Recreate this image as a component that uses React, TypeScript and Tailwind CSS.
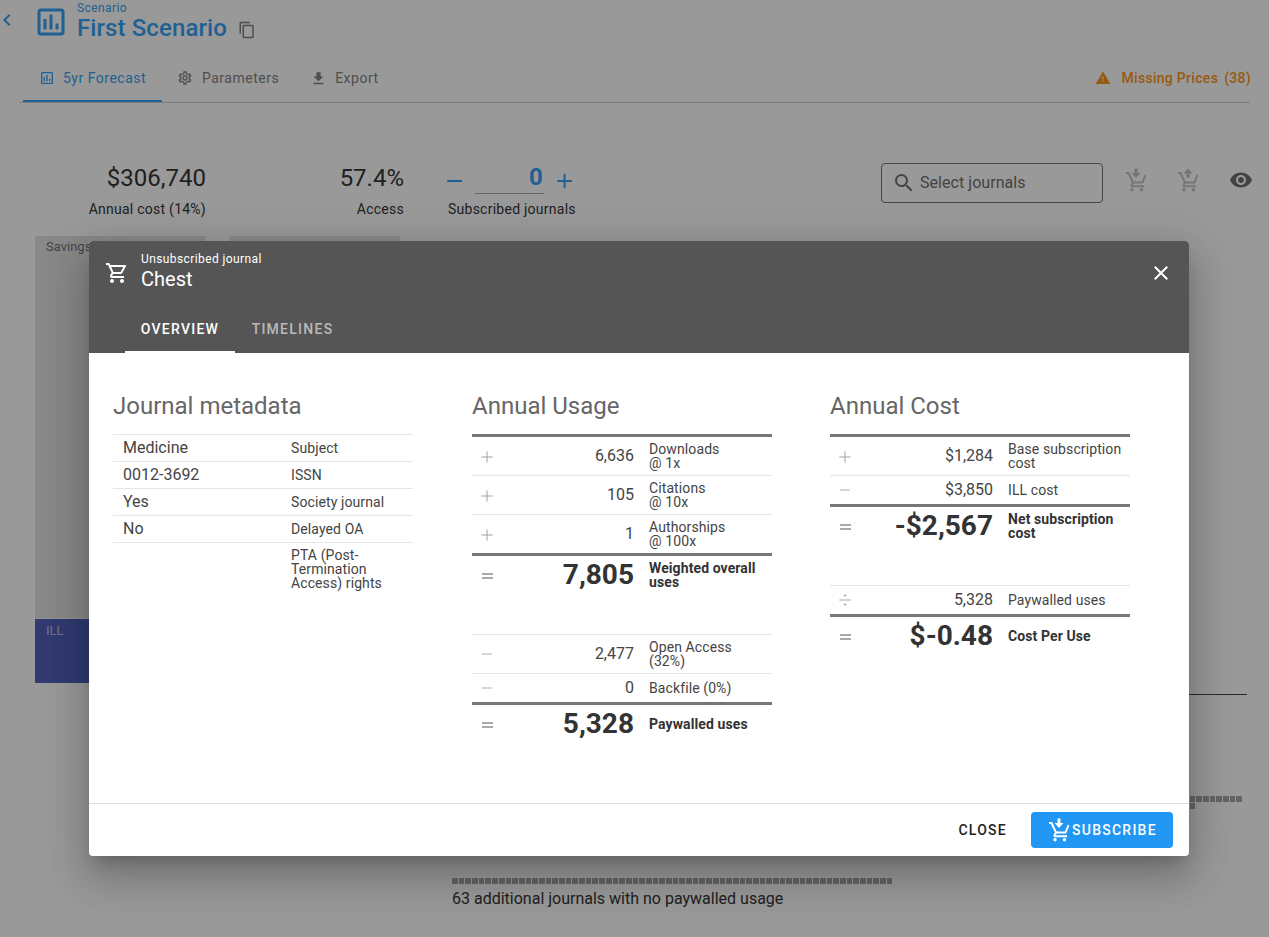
import React from 'react';
import { Divide, Minus, Plus } from 'lucide-react';
import { MdAdd, MdChevronLeft, MdClose, MdContentCopy, MdFileDownload, MdOutlineAssessment, MdOutlineSettings, MdOutlineShoppingCart, MdRemove, MdRemoveRedEye, MdSearch, MdWarning } from 'react-icons/md';

const CartArrow = ({ up = false, className = '' }: { up?: boolean; className?: string }) => (
  <svg viewBox="0 0 24 24" className={className} fill="none" stroke="currentColor">
    <circle cx="8" cy="21.8" r="1.7" fill="currentColor" stroke="none" />
    <circle cx="17.5" cy="21.8" r="1.7" fill="currentColor" stroke="none" />
    <path strokeWidth="2" d="M2 5h2.5L9 14.5l-1.5 2.6c-.3.6 0 1.2.7 1.2H20" />
    <path strokeWidth="2" d="M8.5 14.5h10L21.5 7" />
    {up ? (
      <path fill="currentColor" stroke="none" d="M12 .5l4.5 5h-3V10h-3V5.5h-3z" />
    ) : (
      <path fill="currentColor" stroke="none" d="M10.5 .5h3V5h3L12 10 7.5 5h3z" />
    )}
  </svg>
);

const metadata = [
  ['Medicine', 'Subject'],
  ['0012-3692', 'ISSN'],
  ['Yes', 'Society journal'],
  ['No', 'Delayed OA'],
  ['', 'PTA (Post-Termination Access) rights'],
];

const signs: Record<string, React.ReactNode> = {
  '+': <Plus size={18} strokeWidth={1.2} className="mt-[1px]" />,
  '-': <Minus size={16} strokeWidth={1.2} />,
  '/': <Divide size={18} strokeWidth={1.2} />,
};

type RowProps = { sign: string; value: string; label: string; cost?: boolean };

const Row = ({ sign, value, label, cost = false }: RowProps) => (
  <div className="flex items-center border-b border-[#e6e6e6] py-[5px] last:border-b-0">
    <div className="flex w-[30px] justify-center text-[#999]">{signs[sign]}</div>
    <div className={`${cost ? 'w-[133px]' : 'w-[132px]'} text-right text-[16px] leading-[18px] text-[#444]`}>{value}</div>
    <div className="ml-[15px] w-[122px] whitespace-pre-line text-[14px] leading-[14px] tracking-[0.1px] text-[#444]">{label}</div>
  </div>
);

const Total = ({ value, label, spaced = false, cost = false }: { value: string; label: string; spaced?: boolean; cost?: boolean }) => (
  <div className={`box-content flex h-[38px] items-center border-t-[3px] border-[#777] ${spaced ? 'mb-[40px]' : ''}`}>
    <div className="flex w-[30px] justify-center text-[#aaa]">
      <svg width="11" height="6" viewBox="0 0 11 6" fill="currentColor" className="mt-[1px]">
        <rect width="11" height="2" />
        <rect y="4" width="11" height="2" />
      </svg>
    </div>
    <div className={`${cost ? 'w-[133px]' : 'w-[132px]'} whitespace-nowrap text-right text-[28px] leading-none font-bold text-[#333]`}>{value}</div>
    <div className="ml-[15px] w-[122px] text-[14px] leading-[14px] font-bold tracking-[0.1px] text-[#333]">{label}</div>
  </div>
);

const Group = ({ children, plain = false }: { children: React.ReactNode; plain?: boolean }) => (
  <div className={plain ? 'border-t border-[#e6e6e6]' : 'border-t-[3px] border-[#777]'}>{children}</div>
);

const Heading = ({ children }: { children: React.ReactNode }) => (
  <h3 className="mb-[12px] text-[24px] leading-[32px] text-[#666]">{children}</h3>
);

const Modal = () => (
  <div className="absolute top-[241px] left-[89px] flex h-[615px] w-[1100px] flex-col overflow-hidden rounded bg-white shadow-[0_11px_15px_-7px_rgba(0,0,0,0.2),0_24px_38px_3px_rgba(0,0,0,0.14),0_9px_46px_8px_rgba(0,0,0,0.12)]">
    <div className="h-[112px] bg-[#555] text-white">
      <div className="flex h-[64px] items-center pr-4 pl-4">
        <MdOutlineShoppingCart className="mr-3 h-6 w-6" />
        <div className="flex-1 pb-[1px]">
          <div className="text-[12px] leading-[14px] tracking-[0.4px]">Unsubscribed journal</div>
          <div className="-mt-[1px] text-[20px] leading-[28px]">Chest</div>
        </div>
        <MdClose className="h-6 w-6" />
      </div>
      <div className="ml-9 flex h-[48px]">
        <div className="flex w-[110px] items-center justify-center border-b-2 border-white pt-[2px] text-[14px] font-medium tracking-[1.25px]">OVERVIEW</div>
        <div className="flex w-[115px] items-center justify-center text-[14px] font-medium tracking-[1.25px] text-white/60">TIMELINES</div>
      </div>
    </div>
    <div className="flex flex-1 px-6 pt-[37px]">
      <div className="w-[300px]">
        <Heading>Journal metadata</Heading>
        {metadata.map(([value, label]) => (
          <div key={label} className="flex items-center border-t border-[#e6e6e6] py-[5px]">
            <div className="w-[178px] pl-[10px] text-[16px] leading-[16px] text-[#444]">{value}</div>
            <div className="w-[100px] text-[14px] leading-[14px] tracking-[0.1px] text-[#444]">{label}</div>
          </div>
        ))}
      </div>
      <div className="ml-[59px] w-[300px]">
        <Heading>Annual Usage</Heading>
        <Group>
          <Row sign="+" value="6,636" label={'Downloads\n@ 1x'} />
          <Row sign="+" value="105" label={'Citations\n@ 10x'} />
          <Row sign="+" value="1" label={'Authorships\n@ 100x'} />
        </Group>
        <Total value="7,805" label="Weighted overall uses" spaced />
        <Group plain>
          <Row sign="-" value="2,477" label={'Open Access\n(32%)'} />
          <Row sign="-" value="0" label="Backfile (0%)" />
        </Group>
        <Total value="5,328" label="Paywalled uses" />
      </div>
      <div className="ml-[58px] w-[300px]">
        <Heading>Annual Cost</Heading>
        <Group>
          <Row cost sign="+" value="$1,284" label="Base subscription cost" />
          <Row cost sign="-" value="$3,850" label="ILL cost" />
        </Group>
        <Total cost value="-$2,567" label="Net subscription cost" spaced />
        <Group plain>
          <Row cost sign="/" value="5,328" label="Paywalled uses" />
        </Group>
        <Total cost value="$-0.48" label="Cost Per Use" />
      </div>
    </div>
    <div className="flex h-[53px] items-center justify-end gap-[8px] border-t border-[#e0e0e0] pr-4">
      <button className="flex h-9 items-center px-4 text-[14px] font-medium tracking-[1.25px] text-[#212121]">CLOSE</button>
      <button className="flex h-9 w-[142px] items-center rounded bg-[#2196f3] pl-4 text-[14px] font-medium tracking-[1.25px] text-white">
        <CartArrow className="mr-[1px] -mt-[1px] h-6 w-6" />
        SUBSCRIBE
      </button>
    </div>
  </div>
);

const App = () => (
  <div className="relative h-[937px] overflow-hidden bg-white font-['Roboto',sans-serif] text-[#212121]">
    <div className="flex h-[58px] items-start">
      <MdChevronLeft className="mt-[8px] -ml-[5px] h-6 w-6 text-[#2196f3]" />
      <MdOutlineAssessment className="mt-[4px] ml-[14px] h-[36px] w-[36px] text-[#2196f3]" />
      <div className="mt-[1px] ml-[8px]">
        <div className="text-[12px] leading-[14px] tracking-[0.4px] text-[#2196f3]">Scenario</div>
        <div className="text-[24px] leading-[26px] font-medium tracking-[0.1px] text-[#2196f3]">First Scenario</div>
      </div>
      <MdContentCopy className="mt-[21px] ml-[11px] h-[18px] w-[18px] text-[#757575]" />
    </div>
    <div className="mx-[19px] flex h-[45px] items-start border-b border-[#ccc] text-[14px] tracking-[0.5px]">
      <div className="ml-[4px] flex h-[44px] w-[139px] items-center gap-[8px] border-b-2 border-[#2196f3] pb-[2px] pl-[16px] text-[#2196f3]">
        <MdOutlineAssessment className="h-4 w-4" />5yr Forecast
      </div>
      <div className="ml-[15px] flex h-[40px] items-center gap-[9px] text-[#757575]">
        <MdOutlineSettings className="h-4 w-4" />Parameters
      </div>
      <div className="ml-[31px] flex h-[40px] items-center gap-[8px] text-[#757575]">
        <MdFileDownload className="h-[17px] w-[17px]" />Export
      </div>
      <div className="ml-auto -mr-[1px] flex h-[40px] items-center font-medium tracking-[0.3px] text-[#fb8c00]">
        <MdWarning className="mr-[10px] h-4 w-4" />Missing Prices<span className="ml-[6px]">(38)</span>
      </div>
    </div>
    <div className="mt-[59px] flex items-start">
      <div className="ml-[35px] w-[171px] text-right">
        <div className="text-[24px] leading-[32px]">$306,740</div>
        <div className="mt-[5px] text-[14px] leading-[20px] tracking-[0.25px]">Annual cost (14%)</div>
      </div>
      <div className="ml-[24px] w-[174px] text-right">
        <div className="text-[24px] leading-[32px]">57.4%</div>
        <div className="mt-[5px] text-[14px] leading-[20px] tracking-[0.25px]">Access</div>
      </div>
      <div className="ml-[43px] w-[130px]">
        <div className="flex h-[32px] items-center text-[#2196f3]">
          <MdRemove className="-ml-[5px] mt-[6px] h-[26px] w-[26px]" />
          <span className="ml-[8px] w-[71px] self-end border-b border-[#999] pr-[1px] pb-[3px] text-right text-[24px] leading-[26px] font-bold">0</span>
          <MdAdd className="mt-[6px] ml-[8px] h-[26px] w-[26px]" />
        </div>
        <div className="mt-[5px] pl-[1px] text-[14px] leading-[20px] tracking-[0.25px]">Subscribed journals</div>
      </div>
      <div className="mt-[1px] ml-auto flex items-center">
        <div className="flex h-[40px] w-[222px] items-center rounded border border-[#666] pl-[10px] text-[16px] tracking-[0.05px] text-[#616161]">
          <MdSearch className="mr-[4px] h-6 w-6" />Select journals
        </div>
        <CartArrow className="-mt-[6px] ml-[21px] h-6 w-6 text-[#bdbdbd]" />
        <CartArrow up className="-mt-[6px] ml-[28px] h-6 w-6 text-[#bdbdbd]" />
        <MdRemoveRedEye className="-mt-[6px] mr-[16px] ml-[29px] h-6 w-6 text-[#616161]" />
      </div>
    </div>
    <div className="mt-[17px] flex pl-[35px]">
      <div className="flex gap-[24px]">
        <div className="h-[447px] w-[171px] bg-[#e0e0e0] text-[13px] text-black/60">
          <div className="h-[383px] border-b border-white/50 pt-[1px] pl-[11px]">Savings</div>
          <div className="h-[64px] bg-[#3f51b5] pt-[2px] pl-[11px] text-white/60">ILL</div>
        </div>
        <div className="h-[447px] w-[170px] bg-[#e0e0e0]" />
      </div>
      <div className="ml-[52px] w-[795px]">
        <div className="h-[459px] border-b border-[#333]" />
        <div className="mt-[101px] ml-[2px] flex w-[792px] flex-wrap gap-[1px]">
          {Array.from({ length: 229 }, (_, i) => (
            <span key={i} className="h-[6px] w-[5.7px] bg-[#9e9e9e]" />
          ))}
        </div>
        <div className="mt-[69px] flex w-[445px] flex-wrap gap-[1px]">
          {Array.from({ length: 66 }, (_, i) => (
            <span key={i} className="h-[6px] w-[5.7px] bg-[#9e9e9e]" />
          ))}
        </div>
        <div className="mt-[3px] text-[16px] leading-[24px]">63 additional journals with no paywalled usage</div>
      </div>
    </div>
    <div className="absolute inset-0 bg-[#212121]/46" />
    <Modal />
  </div>
);

export default App;
